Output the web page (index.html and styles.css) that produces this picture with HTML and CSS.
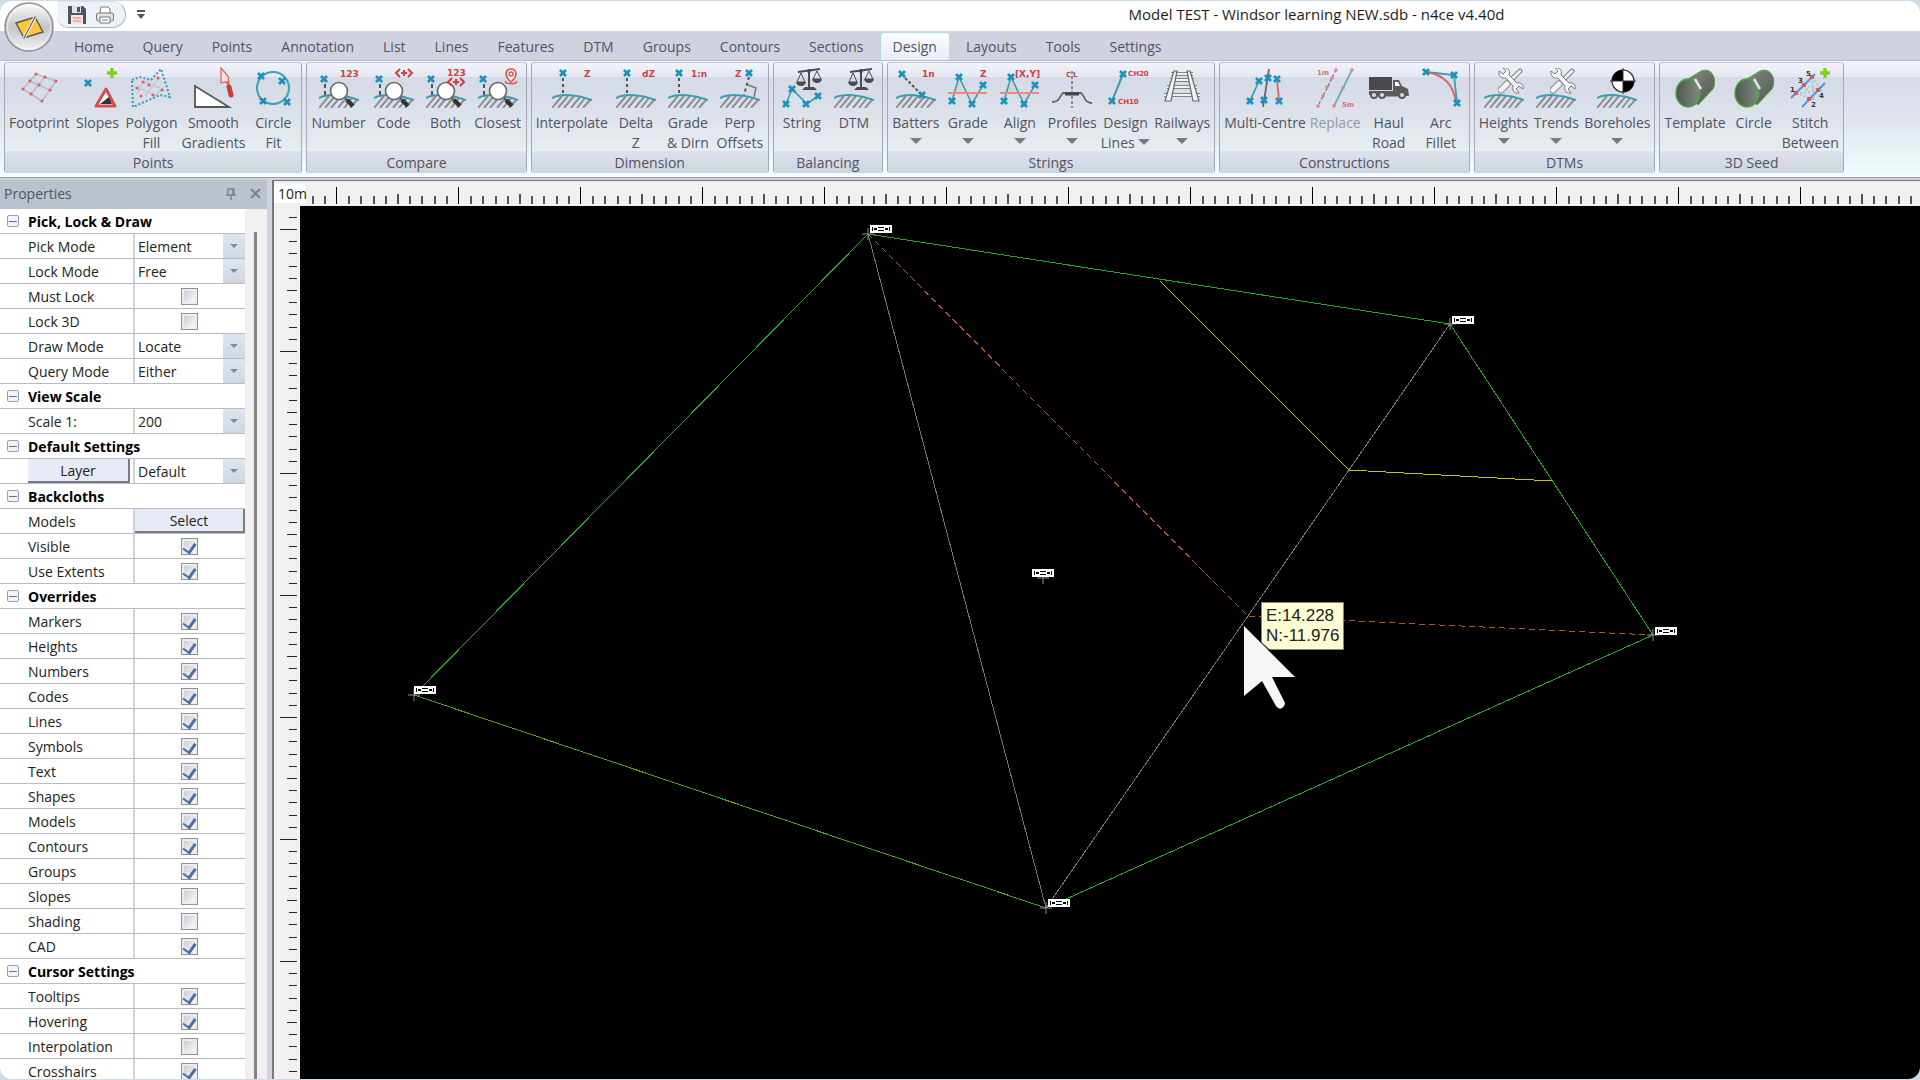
FILE: index.html
```
<!DOCTYPE html>
<html lang="en">
<head>
  <meta charset="UTF-8">
  <meta name="viewport" content="width=device-width, initial-scale=1">
  <title>Model TEST - Windsor learning NEW.sdb - n4ce v4.40d</title>
  <link rel="stylesheet" href="styles.css">
</head>
<body>

<!-- shared icon parts -->
<svg class="sprite" aria-hidden="true">
  <defs>
    <linearGradient id="metal" x1="0" y1="0" x2="0" y2="1">
      <stop offset="0" stop-color="#fdfdfd"/>
      <stop offset=".5" stop-color="#c3c4c7"/>
      <stop offset="1" stop-color="#f2f2f3"/>
    </linearGradient>
    <linearGradient id="pipeSide" x1="0" y1="0" x2="1" y2="1">
      <stop offset="0" stop-color="#8a928a"/>
      <stop offset="1" stop-color="#4d564d"/>
    </linearGradient>
    <linearGradient id="pipeEnd" x1="0" y1="0" x2="1" y2="0">
      <stop offset="0" stop-color="#4f584f"/>
      <stop offset="1" stop-color="#808a80"/>
    </linearGradient>
    <pattern id="ticksX" x="27" y="0" width="122" height="24" patternUnits="userSpaceOnUse">
      <path d="M0 6h1v17h-1z" fill="#000"/>
      <path d="M12 15h2v8h-2zM24 15h2v8h-2zM37 15h2v8h-2zM49 15h2v8h-2zM61 13h2v10h-2zM73 15h2v8h-2zM85 15h2v8h-2zM98 15h2v8h-2zM110 15h2v8h-2z" fill="#555"/>
    </pattern>
    <pattern id="ticksY" x="0" y="23" width="26" height="122" patternUnits="userSpaceOnUse">
      <path d="M6 0h17v1h-17z" fill="#222"/>
      <path d="M15 12h8v1h-8zM15 24h8v1h-8zM15 37h8v1h-8zM15 49h8v1h-8zM13 61h10v1h-10zM15 73h8v1h-8zM15 85h8v1h-8zM15 98h8v1h-8zM15 110h8v1h-8z" fill="#222"/>
    </pattern>
  </defs>

  <symbol id="ground" viewBox="0 0 40 40">
    <path d="M0 40l10-12M6 40l10-12M12 40l10-12M19 40l9-11M25 40l8-10M31 40l7-8" stroke="#8d8f93" stroke-width="2" fill="none"/>
    <path d="M0 30C10 25 26 27 40 32" stroke="#3a9cae" stroke-width="2" fill="none"/>
  </symbol>
  <symbol id="mark" viewBox="0 0 8 8">
    <path d="M1 1l6 6M7 1l-6 6" stroke="#1b92bb" stroke-width="2.8" fill="none"/>
  </symbol>
  <symbol id="plus" viewBox="0 0 10 10">
    <path d="M5 0v10M0 5h10" stroke="#83cf1c" stroke-width="3.4"/>
  </symbol>
  <symbol id="lens" viewBox="0 0 40 40">
    <use href="#ground"/>
    <use href="#mark" x="1" y="7" width="8" height="8"/>
    <path d="M6 16v11" stroke="#555" stroke-width="2" stroke-dasharray="4 3"/>
    <path d="M26 30l3 3" stroke="#555" stroke-width="2"/>
    <path d="M28 32l6 6" stroke="#333" stroke-width="4.5"/>
    <circle cx="20" cy="23" r="8.5" fill="#fff" stroke="#666" stroke-width="1.6"/>
  </symbol>
  <symbol id="balance" viewBox="0 0 26 24">
    <path d="M13 2v18M2 4l22-3" stroke="#4b4b4b" stroke-width="2" fill="none"/>
    <path d="M6 22h15l-3-3h-9z" fill="#4b4b4b"/>
    <path d="M5 5l-4 9h8zM21 3l-4 8h8z" stroke="#4b4b4b" stroke-width="1" fill="none"/>
    <path d="M0 14h10q-1 4-5 4t-5-4zM16 11h10q-1 4-5 4t-5-4z" fill="#4b4b4b"/>
    <circle cx="13" cy="3" r="2" fill="#4b4b4b"/>
  </symbol>
  <symbol id="tools" viewBox="0 0 26 26">
    <path d="M22 3L10 15" stroke="#888" stroke-width="5" stroke-linecap="round"/>
    <path d="M22 3L10 15" stroke="#f4f4f4" stroke-width="2.6" stroke-linecap="round"/>
    <path d="M9 16l-6 6" stroke="#888" stroke-width="7" stroke-linecap="round"/>
    <path d="M9 16l-6 6" stroke="#f4f4f4" stroke-width="5" stroke-linecap="round"/>
    <path d="M1 3l4 3 3-3-3-3c4-1 8 2 6 7l8 8c4-1 7 2 6 6l-4-3-3 3 3 4c-4 1-7-2-6-7l-7-8c-4 1-8-2-7-7z" fill="#f8f8f8" stroke="#777" stroke-width="1"/>
  </symbol>
  <symbol id="zigzag" viewBox="0 0 40 40">
    <path d="M8 18l3-8 5 15h-11zM19 25h10l-5 10z" fill="#f3bdbb" opacity=".4"/>
    <path d="M4 33L11 9l13 27L35 17" stroke="#3a9cae" stroke-width="1.6" fill="none"/>
    <path d="M0 25h39" stroke="#e98c85" stroke-width="2"/>
    <use href="#mark" x="7" y="5" width="8" height="8"/>
    <use href="#mark" x="31" y="13" width="8" height="8"/>
    <use href="#mark" x="0" y="29" width="8" height="8"/>
    <use href="#mark" x="20" y="32" width="8" height="8"/>
  </symbol>
  <symbol id="pipe" viewBox="0 0 40 40">
    <path d="M3 17L26 3q8-3 12 4t0 14L23 37z" fill="url(#pipeSide)" stroke="#4fae45" stroke-width="1"/>
    <ellipse cx="13" cy="25" rx="12" ry="14" fill="url(#pipeEnd)" stroke="#45a63c" stroke-width="1.4"/>
    <path d="M20 11l6 10" stroke="#dfe8df" stroke-width="2.5"/>
  </symbol>
  <symbol id="heightTag" viewBox="0 0 22 8">
    <path d="M0 0h22v8h-22z" fill="#fff"/>
    <path d="M2 2h1v4h-1zM4 3h3v2h-3zM8 2h6v1h-6zM8 5h6v1h-6zM15 3h3v2h-3zM19 2h1v4h-1z" fill="#000"/>
  </symbol>
  <symbol id="point" viewBox="0 0 12 12">
    <path d="M6 0v12M0 6h12" stroke="#8d8d8d" stroke-width="1"/>
  </symbol>
</svg>

<div class="window">
  <header class="titlebar">
    <div class="quick-access">
      <button class="quick-btn" aria-label="Save">
        <svg width="18" height="18" viewBox="0 0 18 18"><path d="M0 0h15l3 3v15h-18z" fill="#50535c"/><path d="M4 0h9v7h-9z" fill="#dfe3ea"/><path d="M9 1h3v5h-3z" fill="#50535c"/><path d="M3 9h12v9h-12z" fill="#f6e3e3"/><path d="M5 12h8M5 15h8" stroke="#dd7a76"/></svg>
      </button>
      <button class="quick-btn" aria-label="Print">
        <svg width="18" height="18" viewBox="0 0 18 18"><path d="M4 7L5 1h7l2 2v4" fill="#fff" stroke="#777"/><rect x=".5" y="7" width="17" height="8" rx="2" fill="#dfe1e5" stroke="#777"/><path d="M4 11h10v6h-10z" fill="#fff" stroke="#777"/><path d="M6 14h3" stroke="#4a7fc0"/><path d="M9 14h3" stroke="#d7574f"/></svg>
      </button>
    </div>
    <button class="quick-more" aria-label="Customise quick access">
      <svg width="8" height="9" viewBox="0 0 8 9"><path d="M0 1h8" stroke="#555" stroke-width="2"/><path d="M0 4h8l-4 5z" fill="#555"/></svg>
    </button>
    <h1 class="title">Model TEST - Windsor learning NEW.sdb - n4ce v4.40d</h1>
    <button class="app-button" aria-label="Application menu">
      <svg width="50" height="50" viewBox="0 0 50 50">
        <circle cx="25" cy="25" r="24" fill="url(#metal)" stroke="#8e9096" stroke-width="1.5"/>
        <circle cx="25" cy="25" r="21.5" fill="none" stroke="#fff" opacity=".6"/>
        <path d="M12 21l19-6 8 15-19 6z" fill="#fbc63a" stroke="#555" stroke-width="1.4"/>
        <path d="M31 15L20 36" stroke="#fff" stroke-width="3"/><path d="M31 15L20 36" stroke="#555" stroke-width="1.2"/>
      </svg>
    </button>
  </header>

  <nav class="tabs">
    <a href="#" class="tab">Home</a>
    <a href="#" class="tab">Query</a>
    <a href="#" class="tab">Points</a>
    <a href="#" class="tab">Annotation</a>
    <a href="#" class="tab">List</a>
    <a href="#" class="tab">Lines</a>
    <a href="#" class="tab">Features</a>
    <a href="#" class="tab">DTM</a>
    <a href="#" class="tab">Groups</a>
    <a href="#" class="tab">Contours</a>
    <a href="#" class="tab">Sections</a>
    <a href="#" class="tab active">Design</a>
    <a href="#" class="tab">Layouts</a>
    <a href="#" class="tab">Tools</a>
    <a href="#" class="tab">Settings</a>
  </nav>

  <div class="ribbon">
    <section class="group">
      <div class="tools">
        <button class="tool">
          <svg class="icon" viewBox="0 0 40 40"><path d="M17 6l20 7M11 13l20 9M4 21l19 12M17 6L4 21M26 9L12 26M37 13L23 33" stroke="#b9bcc4" stroke-width="1.6" fill="none"/><path d="M17 6h0M26 9h0M37 13h0M11 13h0M20 17h0M31 22h0M4 21h0M12 26h0M23 33h0" stroke="#e5605b" stroke-width="3.2" stroke-linecap="round"/></svg>
          <span class="label">Footprint</span>
        </button>
        <button class="tool">
          <svg class="icon" viewBox="0 0 40 40"><use href="#mark" x="7" y="11" width="8" height="8"/><use href="#plus" x="30" y="0" width="10" height="10"/><path d="M29 21l9 17h-19z" fill="#fff" stroke="#d2504d" stroke-width="3" stroke-linejoin="round"/><path d="M23 36l9-7 3 7z" fill="#333"/></svg>
          <span class="label">Slopes</span>
        </button>
        <button class="tool">
          <svg class="icon" viewBox="0 0 40 40"><path d="M13 14l16 6M7 20l17 7M12 14l-6 12M28 10L14 28M32 20l-8 8" stroke="#c4c6cd" stroke-width="1.4"/><path d="M12 14h0M27 10h0M6 20h0M18 17h0M31 22h0M10 28h0M22 27h0" stroke="#e5605b" stroke-width="3.2" stroke-linecap="round"/><path d="M1 12l8-3 11 3L30 1l9 28-10-2L2 39z" fill="none" stroke="#2e9db5" stroke-width="2" stroke-dasharray="2 2"/></svg>
          <span class="label">Polygon<br>Fill</span>
        </button>
        <button class="tool">
          <svg class="icon" viewBox="0 0 40 40"><path d="M2 18v21h34z" fill="#fff" stroke="#555" stroke-width="1.8"/><path d="M28 0l7 8 1 8-4-2-4 1z" fill="#fbdedd" stroke="#e5605b" stroke-width="1.2"/><path d="M34 13l2 6" stroke="#e5605b" stroke-width="2"/><path d="M36 19l2 8" stroke="#c93c3a" stroke-width="5" stroke-linecap="round"/></svg>
          <span class="label">Smooth<br>Gradients</span>
        </button>
        <button class="tool">
          <svg class="icon" viewBox="0 0 40 40"><circle cx="20" cy="20" r="16" fill="none" stroke="#3fa0b0" stroke-width="2"/><use href="#mark" x="4" y="4" width="8" height="8"/><use href="#mark" x="25" y="9" width="8" height="8"/><use href="#mark" x="6" y="29" width="8" height="8"/><use href="#mark" x="30" y="30" width="8" height="8"/></svg>
          <span class="label">Circle<br>Fit</span>
        </button>
      </div>
      <h2 class="caption">Points</h2>
    </section>

    <section class="group">
      <div class="tools">
        <button class="tool">
          <svg class="icon" viewBox="0 0 40 40"><use href="#lens"/><text class="tag" x="21" y="9">123</text></svg>
          <span class="label">Number</span>
        </button>
        <button class="tool">
          <svg class="icon" viewBox="0 0 40 40"><use href="#lens"/><path d="M26 1l-4 4 4 4M34 1l4 4-4 4M30 2v6M27 5h6" stroke="#d2403f" stroke-width="2" fill="none"/></svg>
          <span class="label">Code</span>
        </button>
        <button class="tool">
          <svg class="icon" viewBox="0 0 40 40"><use href="#lens"/><text class="tag" x="21" y="8">123</text><path d="M26 10l-4 4 4 4M34 10l4 4-4 4M30 11v6M27 14h6" stroke="#d2403f" stroke-width="2" fill="none"/></svg>
          <span class="label">Both</span>
        </button>
        <button class="tool">
          <svg class="icon" viewBox="0 0 40 40"><use href="#lens"/><path d="M33 14c-8-7-5-13 0-13s8 6 0 13z" fill="#fdecec" stroke="#dc5551" stroke-width="1.6"/><circle cx="33" cy="6" r="2" fill="none" stroke="#dc5551" stroke-width="1.4"/><path d="M28 13c-4 3 14 4 10 0" stroke="#dc5551" stroke-width="1.4" fill="none"/></svg>
          <span class="label">Closest</span>
        </button>
      </div>
      <h2 class="caption">Compare</h2>
    </section>

    <section class="group">
      <div class="tools">
        <button class="tool">
          <svg class="icon" viewBox="0 0 40 40"><use href="#ground"/><use href="#mark" x="7" y="1" width="8" height="8"/><path d="M11 10v17" stroke="#555" stroke-width="2" stroke-dasharray="3 3"/><text class="tag" x="32" y="9">Z</text></svg>
          <span class="label">Interpolate</span>
        </button>
        <button class="tool">
          <svg class="icon" viewBox="0 0 40 40"><use href="#ground"/><use href="#mark" x="7" y="1" width="8" height="8"/><path d="M11 10v17" stroke="#555" stroke-width="2" stroke-dasharray="3 3"/><text class="tag" x="26" y="9">dZ</text></svg>
          <span class="label">Delta<br>Z</span>
        </button>
        <button class="tool">
          <svg class="icon" viewBox="0 0 40 40"><use href="#ground"/><use href="#mark" x="7" y="1" width="8" height="8"/><path d="M11 10v17" stroke="#555" stroke-width="2" stroke-dasharray="3 3"/><text class="tag" x="23" y="9">1:n</text></svg>
          <span class="label">Grade<br>&amp; Dirn</span>
        </button>
        <button class="tool">
          <svg class="icon" viewBox="0 0 40 40"><use href="#ground"/><text class="tag" x="15" y="9">Z</text><use href="#mark" x="25" y="1" width="8" height="8"/><path d="M29 9l-5 18" stroke="#555" stroke-width="2" stroke-dasharray="3 3"/><path d="M28 17l8 3-2 9" stroke="#777" stroke-width="1.5" fill="none"/></svg>
          <span class="label">Perp<br>Offsets</span>
        </button>
      </div>
      <h2 class="caption">Dimension</h2>
    </section>

    <section class="group">
      <div class="tools">
        <button class="tool">
          <svg class="icon" viewBox="0 0 40 40"><use href="#balance" x="14" y="0" width="26" height="24"/><path d="M4 36l6-15 15 15 11-8" stroke="#3a9cae" stroke-width="1.6" fill="none"/><use href="#mark" x="0" y="32" width="8" height="8"/><use href="#mark" x="6" y="17" width="8" height="8"/><use href="#mark" x="20" y="32" width="8" height="8"/><use href="#mark" x="32" y="24" width="8" height="8"/></svg>
          <span class="label">String</span>
        </button>
        <button class="tool">
          <svg class="icon" viewBox="0 0 40 40"><use href="#ground"/><use href="#balance" x="14" y="0" width="26" height="24"/></svg>
          <span class="label">DTM</span>
        </button>
      </div>
      <h2 class="caption">Balancing</h2>
    </section>

    <section class="group">
      <div class="tools">
        <button class="tool">
          <svg class="icon" viewBox="0 0 40 40"><use href="#ground"/><path d="M9 10l15 15" stroke="#555" stroke-width="2" stroke-dasharray="3 2"/><use href="#mark" x="2" y="2" width="8" height="8"/><use href="#mark" x="22" y="23" width="8" height="8"/><text class="tag" x="26" y="9">1n</text></svg>
          <span class="label">Batters<i class="more"></i></span>
        </button>
        <button class="tool">
          <svg class="icon" viewBox="0 0 40 40"><use href="#zigzag"/><text class="tag" x="32" y="9">Z</text></svg>
          <span class="label">Grade<i class="more"></i></span>
        </button>
        <button class="tool">
          <svg class="icon" viewBox="0 0 40 40"><use href="#zigzag"/><text class="tag" x="15" y="9">[X,Y]</text></svg>
          <span class="label">Align<i class="more"></i></span>
        </button>
        <button class="tool">
          <svg class="icon" viewBox="0 0 40 40"><path d="M20 3v37" stroke="#777" stroke-width="1.6" stroke-dasharray="3 2"/><path d="M0 34q6 0 8-5l3-4h18l3 4q2 6 8 6" stroke="#666" stroke-width="1.8" fill="none"/><path d="M13 26h14" stroke="#444" stroke-width="3"/><text class="tag small" x="14" y="9">C</text><text class="tag small" x="21" y="9">L</text></svg>
          <span class="label">Profiles<i class="more"></i></span>
        </button>
        <button class="tool">
          <svg class="icon" viewBox="0 0 40 40"><path d="M17 6L6 33" stroke="#3a9cae" stroke-width="2"/><use href="#mark" x="13" y="2" width="8" height="8"/><use href="#mark" x="2" y="29" width="8" height="8"/><text class="tag small" x="22" y="8">CH20</text><text class="tag small" x="12" y="36">CH10</text></svg>
          <span class="label">Design<br>Lines <i class="more inline"></i></span>
        </button>
        <button class="tool">
          <svg class="icon" viewBox="0 0 40 40"><path d="M9 6h22M8 12h24M5 19h30M2 27h36" stroke="#666" stroke-width="3.6"/><path d="M9 6h22M8 12h24M5 19h30M2 27h36" stroke="#f2f2f2" stroke-width="1.8"/><path d="M12 3h3L9 33H3zM25 3h3l9 30h-6z" fill="#f2f2f2" stroke="#666" stroke-width="1.2"/></svg>
          <span class="label">Railways<i class="more"></i></span>
        </button>
      </div>
      <h2 class="caption">Strings</h2>
    </section>

    <section class="group">
      <div class="tools">
        <button class="tool">
          <svg class="icon" viewBox="0 0 40 40"><path d="M14 13L5 33" stroke="#3a9cae" stroke-width="1.8"/><path d="M24 1l-6 38" stroke="#666" stroke-width="1.8"/><path d="M32 11l2 22" stroke="#e5605b" stroke-width="1.8"/><use href="#mark" x="10" y="9" width="8" height="8"/><use href="#mark" x="19" y="6" width="8" height="8"/><use href="#mark" x="28" y="7" width="8" height="8"/><use href="#mark" x="1" y="29" width="8" height="8"/><use href="#mark" x="15" y="28" width="8" height="8"/><use href="#mark" x="30" y="29" width="8" height="8"/></svg>
          <span class="label">Multi-Centre</span>
        </button>
        <button class="tool" disabled>
          <svg class="icon" viewBox="0 0 40 40"><path d="M21 2L3 38" stroke="#555" stroke-width="1.4" stroke-dasharray="3 2"/><path d="M37 2L19 38" stroke="#3a9cae" stroke-width="1.8"/><path d="M21 2h0M17 10h0M12 19h0M8 28h0M3 38h0M37 2h0M28 20h0M19 38h0" stroke="#e5605b" stroke-width="3.6" stroke-linecap="round"/><text class="tag small" x="2" y="7">1m</text><text class="tag small" x="27" y="39">5m</text></svg>
          <span class="label">Replace</span>
        </button>
        <button class="tool">
          <svg class="icon" viewBox="0 0 40 40"><path d="M0 9h23v13h-23z" fill="#4a4a4d"/><path d="M0 23h24v4h-24zM24 27V12h6l3 6 6 3 1 7h-3z" fill="#5b5b5e"/><path d="M26 14h3l2 4h-5z" fill="#fff"/><g fill="#ddd" stroke="#5b5b5e" stroke-width="2"><circle cx="5" cy="27" r="3"/><circle cx="13" cy="27" r="3"/><circle cx="33" cy="27" r="3"/></g><path d="M17 27h12" stroke="#5b5b5e" stroke-width="3"/></svg>
          <span class="label">Haul<br>Road</span>
        </button>
        <button class="tool">
          <svg class="icon" viewBox="0 0 40 40"><path d="M5 4l28 3 3 28" stroke="#3a9cae" stroke-width="1.8" fill="none"/><path d="M5 4q27 4 30 31" stroke="#e0625c" stroke-width="1.8" fill="none"/><use href="#mark" x="1" y="0" width="8" height="8"/><use href="#mark" x="29" y="3" width="8" height="8"/><use href="#mark" x="32" y="31" width="8" height="8"/></svg>
          <span class="label">Arc<br>Fillet</span>
        </button>
      </div>
      <h2 class="caption">Constructions</h2>
    </section>

    <section class="group">
      <div class="tools">
        <button class="tool">
          <svg class="icon" viewBox="0 0 40 40"><use href="#ground"/><use href="#tools" x="14" y="0" width="26" height="26"/></svg>
          <span class="label">Heights<i class="more"></i></span>
        </button>
        <button class="tool">
          <svg class="icon" viewBox="0 0 40 40"><use href="#ground"/><use href="#tools" x="14" y="0" width="26" height="26"/></svg>
          <span class="label">Trends<i class="more"></i></span>
        </button>
        <button class="tool">
          <svg class="icon" viewBox="0 0 40 40"><use href="#ground"/><circle cx="26" cy="13" r="11" fill="#fff" stroke="#333" stroke-width="1.2"/><path d="M26 13V2a11 11 0 0 0-11 11zM26 13v11a11 11 0 0 0 11-11z" fill="#000"/><path d="M26 0v26M13 13h26" stroke="#333"/></svg>
          <span class="label">Boreholes<i class="more"></i></span>
        </button>
      </div>
      <h2 class="caption">DTMs</h2>
    </section>

    <section class="group">
      <div class="tools">
        <button class="tool">
          <svg class="icon" viewBox="0 0 40 40"><use href="#pipe"/></svg>
          <span class="label">Template</span>
        </button>
        <button class="tool">
          <svg class="icon" viewBox="0 0 40 40"><use href="#pipe"/></svg>
          <span class="label">Circle</span>
        </button>
        <button class="tool">
          <svg class="icon" viewBox="0 0 40 40"><path d="M6 25l18 7M14 17l18 6M6 25l26-2M14 17l10 15M22 9l10 14M22 9l2 23" stroke="#8fc4c4" stroke-width="1.2" stroke-dasharray="2 2"/><path d="M1 30L25 6M12 39l23-24" stroke="#4b95e6" stroke-width="2"/><path d="M6 25h0M14 17h0M22 9h0M19 31h0M28 22h0" stroke="#dc5551" stroke-width="4.6" stroke-linecap="round"/><text class="tag num" x="0" y="24">1</text><text class="tag num" x="8" y="15">3</text><text class="tag num" x="16" y="8">5</text><text class="tag num" x="21" y="39">2</text><text class="tag num" x="29" y="30">4</text><use href="#plus" x="30" y="0" width="10" height="10"/></svg>
          <span class="label">Stitch<br>Between</span>
        </button>
      </div>
      <h2 class="caption">3D Seed</h2>
    </section>
  </div>

  <div class="workspace">
    <aside class="panel">
      <div class="panel-head">
        <h2>Properties</h2>
        <button class="panel-btn" aria-label="Pin">
          <svg width="10" height="12" viewBox="0 0 10 12"><path d="M2 7V1h6v6M0 7h10M5 7v5M7 1v6" stroke="#7d828a" stroke-width="1.4" fill="none"/></svg>
        </button>
        <button class="panel-btn" aria-label="Close">
          <svg width="11" height="11" viewBox="0 0 11 11"><path d="M1 1l9 9M10 1l-9 9" stroke="#7d828a" stroke-width="2"/></svg>
        </button>
      </div>
      <div class="panel-body">
        <div class="props">
          <h3 class="section"><button class="fold" aria-label="Collapse"></button>Pick, Lock &amp; Draw</h3>
          <div class="row"><label for="pick">Pick Mode</label><span class="value combo"><select id="pick"><option>Element</option></select><i class="drop"></i></span></div>
          <div class="row"><label for="lock">Lock Mode</label><span class="value combo"><select id="lock"><option>Free</option></select><i class="drop"></i></span></div>
          <div class="row"><label for="must">Must Lock</label><span class="value"><input type="checkbox" id="must"></span></div>
          <div class="row"><label for="lock3d">Lock 3D</label><span class="value"><input type="checkbox" id="lock3d"></span></div>
          <div class="row"><label for="draw">Draw Mode</label><span class="value combo"><select id="draw"><option>Locate</option></select><i class="drop"></i></span></div>
          <div class="row"><label for="query">Query Mode</label><span class="value combo"><select id="query"><option>Either</option></select><i class="drop"></i></span></div>
          <h3 class="section"><button class="fold" aria-label="Collapse"></button>View Scale</h3>
          <div class="row"><label for="scale">Scale 1:</label><span class="value combo"><select id="scale"><option>200</option></select><i class="drop"></i></span></div>
          <h3 class="section"><button class="fold" aria-label="Collapse"></button>Default Settings</h3>
          <div class="row"><span class="name"><button class="push">Layer</button></span><span class="value combo"><select aria-label="Layer"><option>Default</option></select><i class="drop"></i></span></div>
          <h3 class="section"><button class="fold" aria-label="Collapse"></button>Backcloths</h3>
          <div class="row"><label for="bmodels">Models</label><span class="value"><button class="push" id="bmodels">Select</button></span></div>
          <div class="row"><label for="visible">Visible</label><span class="value"><input type="checkbox" id="visible" checked></span></div>
          <div class="row"><label for="extents">Use Extents</label><span class="value"><input type="checkbox" id="extents" checked></span></div>
          <h3 class="section"><button class="fold" aria-label="Collapse"></button>Overrides</h3>
          <div class="row"><label for="markers">Markers</label><span class="value"><input type="checkbox" id="markers" checked></span></div>
          <div class="row"><label for="heights">Heights</label><span class="value"><input type="checkbox" id="heights" checked></span></div>
          <div class="row"><label for="numbers">Numbers</label><span class="value"><input type="checkbox" id="numbers" checked></span></div>
          <div class="row"><label for="codes">Codes</label><span class="value"><input type="checkbox" id="codes" checked></span></div>
          <div class="row"><label for="lines">Lines</label><span class="value"><input type="checkbox" id="lines" checked></span></div>
          <div class="row"><label for="symbols">Symbols</label><span class="value"><input type="checkbox" id="symbols" checked></span></div>
          <div class="row"><label for="text">Text</label><span class="value"><input type="checkbox" id="text" checked></span></div>
          <div class="row"><label for="shapes">Shapes</label><span class="value"><input type="checkbox" id="shapes" checked></span></div>
          <div class="row"><label for="models">Models</label><span class="value"><input type="checkbox" id="models" checked></span></div>
          <div class="row"><label for="contours">Contours</label><span class="value"><input type="checkbox" id="contours" checked></span></div>
          <div class="row"><label for="groups">Groups</label><span class="value"><input type="checkbox" id="groups" checked></span></div>
          <div class="row"><label for="slopes">Slopes</label><span class="value"><input type="checkbox" id="slopes"></span></div>
          <div class="row"><label for="shading">Shading</label><span class="value"><input type="checkbox" id="shading"></span></div>
          <div class="row"><label for="cad">CAD</label><span class="value"><input type="checkbox" id="cad" checked></span></div>
          <h3 class="section"><button class="fold" aria-label="Collapse"></button>Cursor Settings</h3>
          <div class="row"><label for="tooltips">Tooltips</label><span class="value"><input type="checkbox" id="tooltips" checked></span></div>
          <div class="row"><label for="hovering">Hovering</label><span class="value"><input type="checkbox" id="hovering" checked></span></div>
          <div class="row"><label for="interp">Interpolation</label><span class="value"><input type="checkbox" id="interp"></span></div>
          <div class="row"><label for="cross">Crosshairs</label><span class="value"><input type="checkbox" id="cross" checked></span></div>
        </div>
        <div class="scroll"><div class="thumb"></div></div>
      </div>
    </aside>

    <main class="view">
      <div class="ruler-top">
        <span class="unit">10m</span>
        <svg class="ticks"><rect width="100%" height="100%" fill="url(#ticksX)"/></svg>
      </div>
      <div class="ruler-left">
        <svg class="ticks"><rect width="100%" height="100%" fill="url(#ticksY)"/></svg>
      </div>
      <div class="canvas">
        <svg class="drawing">
          <g fill="none" shape-rendering="crispEdges">
            <path d="M568 28L746 702M1150 118L746 702" stroke="#777"/>
            <path d="M568 28L1150 118 1353 429 746 702 114 489z" stroke="#2aa32a"/>
            <path d="M114 489L746 702" stroke="#8a9a2a" stroke-dasharray="3 5"/>
            <path d="M860 75L1049 264 1252 275" stroke="#c9c412"/>
            <path d="M568 28L948 410 1353 429" stroke="#b4581a" stroke-dasharray="6 4"/>
          </g>
          <use href="#point" x="562" y="22" width="12" height="12"/>
          <use href="#point" x="1144" y="112" width="12" height="12"/>
          <use href="#point" x="1347" y="423" width="12" height="12"/>
          <use href="#point" x="740" y="696" width="12" height="12"/>
          <use href="#point" x="108" y="483" width="12" height="12"/>
          <use href="#point" x="737" y="366" width="12" height="12"/>
          <use href="#heightTag" x="570" y="19" width="22" height="8"/>
          <use href="#heightTag" x="1152" y="110" width="22" height="8"/>
          <use href="#heightTag" x="1355" y="421" width="22" height="8"/>
          <use href="#heightTag" x="748" y="693" width="22" height="8"/>
          <use href="#heightTag" x="114" y="480" width="22" height="8"/>
          <use href="#heightTag" x="732" y="363" width="22" height="8"/>
        </svg>
        <div class="coords">E:14.228<br>N:-11.976</div>
        <svg class="pointer" width="60" height="92" viewBox="0 0 60 92"><path d="M4 3v72l19-16 13 24q5 7 11 1l2-4-13-26h24z" fill="#000" opacity=".75"/><path d="M3 2v70l18-15 14 25q3 4 6 2t3-5L31 53h23z" fill="#f6f6f6"/></svg>
      </div>
    </main>
  </div>
</div>

</body>
</html>
```

FILE: styles.css
```
* {
  box-sizing: border-box;
}

body {
  margin: 0;
  background: #cddde7;
  font-family: "Open Sans", sans-serif;
  font-size: 14px;
  color: #50545f;
  overflow: hidden;
}

button {
  font: inherit;
  color: inherit;
  background: none;
  border: none;
  padding: 0;
}

h1, h2, h3 {
  margin: 0;
  font-size: inherit;
  font-weight: 400;
}

.sprite {
  position: absolute;
  width: 0;
  height: 0;
}

.window {
  display: flex;
  flex-direction: column;
  height: calc(100vh - 2px);
  margin: 1px 0;
  border-radius: 12px;
  overflow: hidden;
  background: #d0d3df;
}

/* title bar */
.titlebar {
  position: relative;
  display: flex;
  align-items: flex-start;
  height: 30px;
  padding-left: 57px;
  background: #fff;
  color: #1c1c1c;
}

.quick-access {
  display: flex;
  align-items: center;
  gap: 10px;
  height: 27px;
  padding: 0 11px;
  background: #edf1f8;
  border: 1px solid #a9b1bf;
  border-top-color: #dfe3ea;
  border-left: none;
  border-radius: 0 14px 14px 12px;
}

.quick-btn svg {
  display: block;
}

.quick-more {
  margin: 3px 0 0 11px;
}

.title {
  flex: 1;
  padding-left: 568px;
  line-height: 27px;
  font-size: 15px;
  text-align: center;
}

.app-button {
  position: absolute;
  left: 4px;
  top: 1px;
  z-index: 2;
}

.app-button svg {
  display: block;
}

/* tabs */
.tabs {
  display: flex;
  gap: 3px;
  height: 29px;
  padding: 1px 0 0 61px;
  background: #d0d3df;
}

.tab {
  padding: 0 12px;
  line-height: 27px;
  border: 1px solid transparent;
  border-bottom: none;
  border-radius: 4px 4px 0 0;
  color: #50545f;
  text-decoration: none;
}

.tab.active {
  background: linear-gradient(#fafdff, #e8ecf6);
  border-color: #a8e0ea;
}

/* ribbon */
.ribbon {
  display: flex;
  gap: 4px;
  height: 117px;
  padding: 1px 4px 3px;
  border-top: 1px solid #b9bcc9;
  border-bottom: 1px solid #fff;
  background: linear-gradient(#f4f6fb 0, #e6e9f3 16px, #d6dce8 16px, #dfe4ed 60px, #e9f3f6 90px, #f0fdff);
}

.group {
  display: flex;
  flex-direction: column;
  border: 1px solid #a5a8b2;
  border-color: #c3c6cf #a5a8b2 #888b95;
  border-radius: 3px;
  background: linear-gradient(#f1f3f9 0, #e3e7f1 14px, #d4dae6 14px, #dce1ea 50px, #e7eeef 88px);
}

.tools {
  display: flex;
  padding: 5px 2px 0;
}

.tool {
  display: flex;
  flex-direction: column;
  align-items: center;
  min-width: 52px;
  padding: 0 2px;
}

.tool:disabled {
  color: #9599a2;
}

.tool:disabled .icon {
  opacity: .7;
}

.icon {
  width: 40px;
  height: 40px;
  overflow: visible;
}

.tag {
  font: bold 9px "DejaVu Sans", sans-serif;
  fill: #d2403f;
}

.tag.small {
  font-size: 7px;
}

.tag.num {
  font-size: 7px;
  fill: #333;
}

.label {
  height: 38px;
  margin-top: 5px;
  line-height: 20px;
  text-align: center;
  white-space: nowrap;
}

.more {
  display: block;
  width: 12px;
  margin: 5px auto 0;
  border: 6px solid transparent;
  border-top-color: #777a80;
  border-bottom: none;
}

.more.inline {
  display: inline-block;
  margin: 0;
  vertical-align: 3px;
}

.caption {
  height: 22px;
  line-height: 23px;
  text-align: center;
  background: linear-gradient(#dde1ec, #d0d4df);
}

/* workspace */
.workspace {
  display: flex;
  flex: 1;
  min-height: 0;
  padding-top: 2px;
  border-top: 1px solid #9a9dab;
  background: #d0d3df;
}

.panel {
  display: flex;
  flex-direction: column;
  width: 267px;
}

.panel-head {
  display: flex;
  align-items: center;
  gap: 14px;
  height: 29px;
  padding: 0 6px 2px 4px;
  background: #b9c2cd;
}

.panel-head h2 {
  flex: 1;
}

.panel-btn svg {
  display: block;
}

.panel-body {
  display: flex;
  flex: 1;
  min-height: 0;
}

.props {
  flex: 1;
  overflow: hidden;
  background: #fff;
  color: #222;
}

.section, .row {
  display: flex;
  align-items: center;
  height: 25px;
  border-bottom: 1px solid #b8bbc6;
}

.section {
  gap: 9px;
  padding-left: 7px;
  font-weight: 700;
  color: #000;
}

.fold {
  width: 12px;
  height: 12px;
  border: 1px solid #9b9ea6;
  border-radius: 2px;
  background: linear-gradient(#5571a5, #5571a5) center / 8px 1px no-repeat #f2f4f8;
}

.row label, .name {
  display: flex;
  align-items: center;
  width: 135px;
  height: 24px;
  padding-left: 28px;
  border-right: 2px solid #d0d2dc;
}

.name {
  padding-right: 3px;
}

.value {
  display: flex;
  flex: 1;
  align-items: center;
  justify-content: center;
  height: 24px;
}

.combo select {
  flex: 1;
  min-width: 0;
  height: 24px;
  padding: 0 0 0 3px;
  appearance: none;
  border: none;
  background: #fff;
  font: inherit;
  color: inherit;
}

.drop {
  display: flex;
  align-items: center;
  justify-content: center;
  width: 22px;
  height: 24px;
  background: linear-gradient(#dfe5f0, #d0d6e2);
}

.drop::after {
  content: "";
  border: 4px solid transparent;
  border-top-color: #84878e;
  border-bottom: none;
}

.push {
  width: 100%;
  height: 24px;
  background: #e6eaf6;
  border: solid #777b88;
  border-width: 0 2px 2px 0;
}

input[type="checkbox"] {
  appearance: none;
  width: 17px;
  height: 17px;
  margin: 0 2px 0 0;
  border: 1px solid #8f9299;
  background: linear-gradient(135deg, #c9ced6, #fafafa) content-box, #ececee;
  padding: 2px;
}

input[type="checkbox"]:checked::after {
  content: "";
  display: block;
  width: 6px;
  height: 10px;
  margin: 0 auto;
  border: solid #4a6fa5;
  border-width: 0 3px 2px 0;
  transform: rotate(35deg);
}

.scroll {
  width: 22px;
  padding: 23px 0 0 9px;
  background: #f0f0f0;
}

.thumb {
  width: 3px;
  height: 100%;
  background: #858585;
}

/* drawing view */
.view {
  display: grid;
  grid-template-columns: 26px 1fr;
  grid-template-rows: 25px 1fr;
  flex: 1;
  min-width: 0;
  margin-left: 5px;
  border: solid #77777d;
  border-width: 1px 0 0 2px;
  background: #f0f0f0;
}

.ruler-top {
  grid-column: 1 / 3;
  display: flex;
}

.unit {
  width: 31px;
  margin: 3px 4px 3px 0;
  padding-left: 4px;
  line-height: 19px;
  background: #fff;
  color: #222;
}

.ticks {
  display: block;
  flex: 1;
  width: 100%;
  height: 100%;
}

.ruler-left {
  display: flex;
}

.canvas {
  position: relative;
  background: #000;
  overflow: hidden;
}

.drawing {
  display: block;
  width: 100%;
  height: 100%;
}

.coords {
  position: absolute;
  left: 961px;
  top: 396px;
  padding: 3px 4px;
  border: 1px solid #86866f;
  background: #fffbd2;
  color: #222;
  font: 17px/20px "Liberation Sans", sans-serif;
}

.pointer {
  position: absolute;
  left: 941px;
  top: 418px;
}
```
